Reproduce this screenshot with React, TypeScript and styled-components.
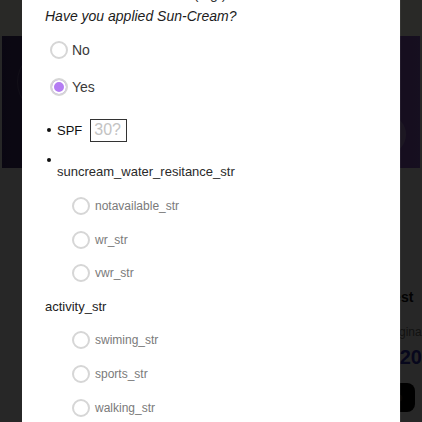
import React, { useLayoutEffect, useRef } from "react";
import styled, { createGlobalStyle } from "styled-components";

const GlobalStyle = createGlobalStyle`
  html, body {
    margin: 0;
    padding: 0;
  }
  body {
    font-family: "Liberation Sans", Arial, sans-serif;
    background: #f2f2f2;
  }
  * {
    box-sizing: border-box;
  }
`;

/* ---------- page behind the modal ---------- */

const Page = styled.div`
  min-height: 100vh;
  background: #f2f2f2;
  overflow: hidden;
`;

const TopBar = styled.header`
  height: 36px;
  background: #fffaf2;
  display: flex;
  align-items: center;
  justify-content: center;
  font-weight: 700;
  font-size: 16px;
  color: #222;
`;

const Banner = styled.section`
  position: relative;
  height: 132px;
  margin: 0 2px;
  background: linear-gradient(90deg, #43306f 0%, #6a47a0 55%, #8c5cc4 100%);
  overflow: hidden;
`;

const CarouselRing = styled.span`
  position: absolute;
  left: 15px;
  top: 13px;
  width: 66px;
  height: 66px;
  border-radius: 50%;
  border: 1.5px solid rgba(255, 255, 255, 0.22);
`;

const CarouselDot = styled.span`
  position: absolute;
  left: 365px;
  top: 79px;
  width: 39px;
  height: 39px;
  border-radius: 50%;
  background: rgba(255, 255, 255, 0.32);
`;

const Products = styled.section`
  padding: 16px 0 0 24px;
`;

const SectionTitle = styled.h2`
  margin: 0;
  font-size: 18px;
  line-height: 24px;
  color: #111;
`;

const CardRow = styled.div`
  display: flex;
  gap: 8px;
  margin-top: 12px;
`;

const Card = styled.article`
  flex-shrink: 0;
  width: 351px;
  display: flex;
  flex-direction: column;
  align-items: flex-start;
`;

const CardImage = styled.div`
  height: 66px;
  width: 100%;
  background: #f2f2f2;
`;

const CardName = styled.div`
  font-size: 14px;
  line-height: 22px;
  font-weight: 700;
  color: #111;
`;

const CardOriginal = styled.div`
  margin-top: 16px;
  font-size: 12px;
  line-height: 16px;
  color: #6f6f6f;
  white-space: nowrap;
`;

const CardPrice = styled.div`
  margin-top: 5px;
  font-size: 20px;
  line-height: 24px;
  font-weight: 700;
  color: #2f2fb0;
  white-space: nowrap;
`;

const CartButton = styled.button`
  margin-top: 14px;
  width: 32px;
  height: 29px;
  border: none;
  border-radius: 8px;
  background: #000;
  display: flex;
  align-items: center;
  justify-content: center;
  padding: 0;
`;

/* ---------- modal ---------- */

const Overlay = styled.div`
  position: fixed;
  inset: 0;
  z-index: 10;
  background: rgba(0, 0, 0, 0.84);
  display: flex;
  justify-content: center;
`;

const Panel = styled.div`
  position: relative;
  width: 378px;
  height: 100%;
  background: #fff;
  overflow-y: auto;
  scrollbar-width: none;
  padding: 20px 23px 60px;
  box-shadow: 1px 0 0 rgba(255, 255, 255, 0.06);
  &::-webkit-scrollbar {
    display: none;
  }
`;

const PanelHeading = styled.h2`
  margin: 0 0 14px;
  font-size: 18px;
  line-height: 24px;
  color: #111;
`;

const Intro = styled.p`
  margin: 0;
  font-size: 14px;
  line-height: 20px;
  color: #333;
`;

const Question = styled.p`
  margin: 2px 0 0;
  font-size: 14px;
  line-height: 20px;
  font-style: italic;
  color: #1c1c1c;
`;

const RadioGroup = styled.div<{ $indent: number; $top?: number }>`
  display: flex;
  flex-direction: column;
  padding-left: ${({ $indent }) => $indent}px;
  margin-top: ${({ $top = 0 }) => $top}px;
`;

const OptionRow = styled.label<{ $sub?: boolean }>`
  display: flex;
  align-items: center;
  gap: ${({ $sub }) => ($sub ? 5 : 4)}px;
  height: ${({ $sub }) => ($sub ? 33.6 : 37)}px;
  font-size: ${({ $sub }) => ($sub ? 12 : 14)}px;
  color: ${({ $sub }) => ($sub ? "#7a7a7a" : "#3a3a3a")};
  cursor: pointer;
`;

const Radio = styled.input.attrs({ type: "radio" })`
  appearance: none;
  -webkit-appearance: none;
  width: 18px;
  height: 18px;
  margin: 0;
  flex-shrink: 0;
  border-radius: 50%;
  border: 2px solid #d6d6d6;
  background: #fff;
  &:checked {
    background: #b47cf3;
    box-shadow: inset 0 0 0 2px #fff;
  }
`;

const BulletList = styled.ul`
  list-style: none;
  margin: 13px 0 0;
  padding: 0 0 0 2px;
`;

const Bullet = styled.span`
  display: block;
  width: 4px;
  height: 4px;
  border-radius: 50%;
  background: #111;
  flex-shrink: 0;
`;

const SpfItem = styled.li`
  display: flex;
  align-items: center;
  height: 23px;
`;

const SpfLabel = styled.span`
  margin-left: 6px;
  font-size: 13px;
  color: #111;
`;

const SpfInput = styled.input`
  margin-left: 8px;
  width: 37px;
  height: 23px;
  border: 1px solid #333;
  border-radius: 0;
  padding: 0 3px;
  font-family: "Liberation Sans", Arial, sans-serif;
  font-size: 16px;
  color: #333;
  outline: none;
  &::placeholder {
    color: #c3c3c3;
  }
`;

const WaterItem = styled.li`
  padding-top: 16.5px;
`;

const WaterLabel = styled.div`
  margin: 2px 0 9.2px 10px;
  font-size: 13px;
  line-height: 16px;
  color: #2a2a2a;
`;

const GroupLabel = styled.div`
  display: flex;
  align-items: center;
  height: 33.6px;
  font-size: 13px;
  color: #222;
`;

const SaveButton = styled.button`
  margin-top: 24px;
  width: 100%;
  height: 40px;
  border: none;
  border-radius: 8px;
  background: #b47cf3;
  color: #fff;
  font-family: "Liberation Sans", Arial, sans-serif;
  font-size: 15px;
  font-weight: 700;
`;

const waterOptions = ["notavailable_str", "wr_str", "vwr_str"];
const activityOptions = [
  "swiming_str",
  "sports_str",
  "walking_str",
  "running_str",
  "other_str",
];

export default function App() {
  const panelRef = useRef<HTMLDivElement>(null);
  const questionRef = useRef<HTMLParagraphElement>(null);

  useLayoutEffect(() => {
    if (panelRef.current && questionRef.current) {
      panelRef.current.scrollTop = questionRef.current.offsetTop - 6;
    }
  }, []);

  return (
    <>
      <GlobalStyle />
      <Page>
        <TopBar>SunCare</TopBar>
        <Banner>
          <CarouselRing />
          <CarouselDot />
        </Banner>
        <Products>
          <SectionTitle>Bestseller</SectionTitle>
          <CardRow>
            <Card>
              <CardImage />
              <CardName>Sun Milk SPF 30</CardName>
              <CardOriginal>Original 24,99 €</CardOriginal>
              <CardPrice>€ 19,99</CardPrice>
              <CartButton aria-label="add" />
            </Card>
            <Card>
              <CardImage />
              <CardName>Best</CardName>
              <CardOriginal>Original 29,99 €</CardOriginal>
              <CardPrice>€ 20,99</CardPrice>
              <CartButton aria-label="add">
                <svg width="14" height="14" viewBox="0 0 24 24" fill="none">
                  <circle cx="12" cy="12" r="6" fill="#3a2a1a" />
                </svg>
              </CartButton>
            </Card>
          </CardRow>
        </Products>
      </Page>

      <Overlay>
        <Panel ref={panelRef}>
          <PanelHeading>Daily log</PanelHeading>
          <Intro>Protection from the sun (e.g.)</Intro>
          <Question ref={questionRef}>Have you applied Sun-Cream?</Question>
          <RadioGroup $indent={5} $top={5.5}>
            <OptionRow>
              <Radio name="applied" />
              No
            </OptionRow>
            <OptionRow>
              <Radio name="applied" defaultChecked />
              Yes
            </OptionRow>
          </RadioGroup>

          <BulletList>
            <SpfItem>
              <Bullet />
              <SpfLabel>SPF</SpfLabel>
              <SpfInput placeholder="30?" />
            </SpfItem>
            <WaterItem>
              <Bullet />
              <WaterLabel>suncream_water_resitance_str</WaterLabel>
              <RadioGroup $indent={25}>
                {waterOptions.map((option) => (
                  <OptionRow $sub key={option}>
                    <Radio name="water" />
                    {option}
                  </OptionRow>
                ))}
              </RadioGroup>
            </WaterItem>
          </BulletList>

          <GroupLabel>activity_str</GroupLabel>
          <RadioGroup $indent={27}>
            {activityOptions.map((option) => (
              <OptionRow $sub key={option}>
                <Radio name="activity" />
                {option}
              </OptionRow>
            ))}
          </RadioGroup>

          <SaveButton>save_str</SaveButton>
        </Panel>
      </Overlay>
    </>
  );
}
